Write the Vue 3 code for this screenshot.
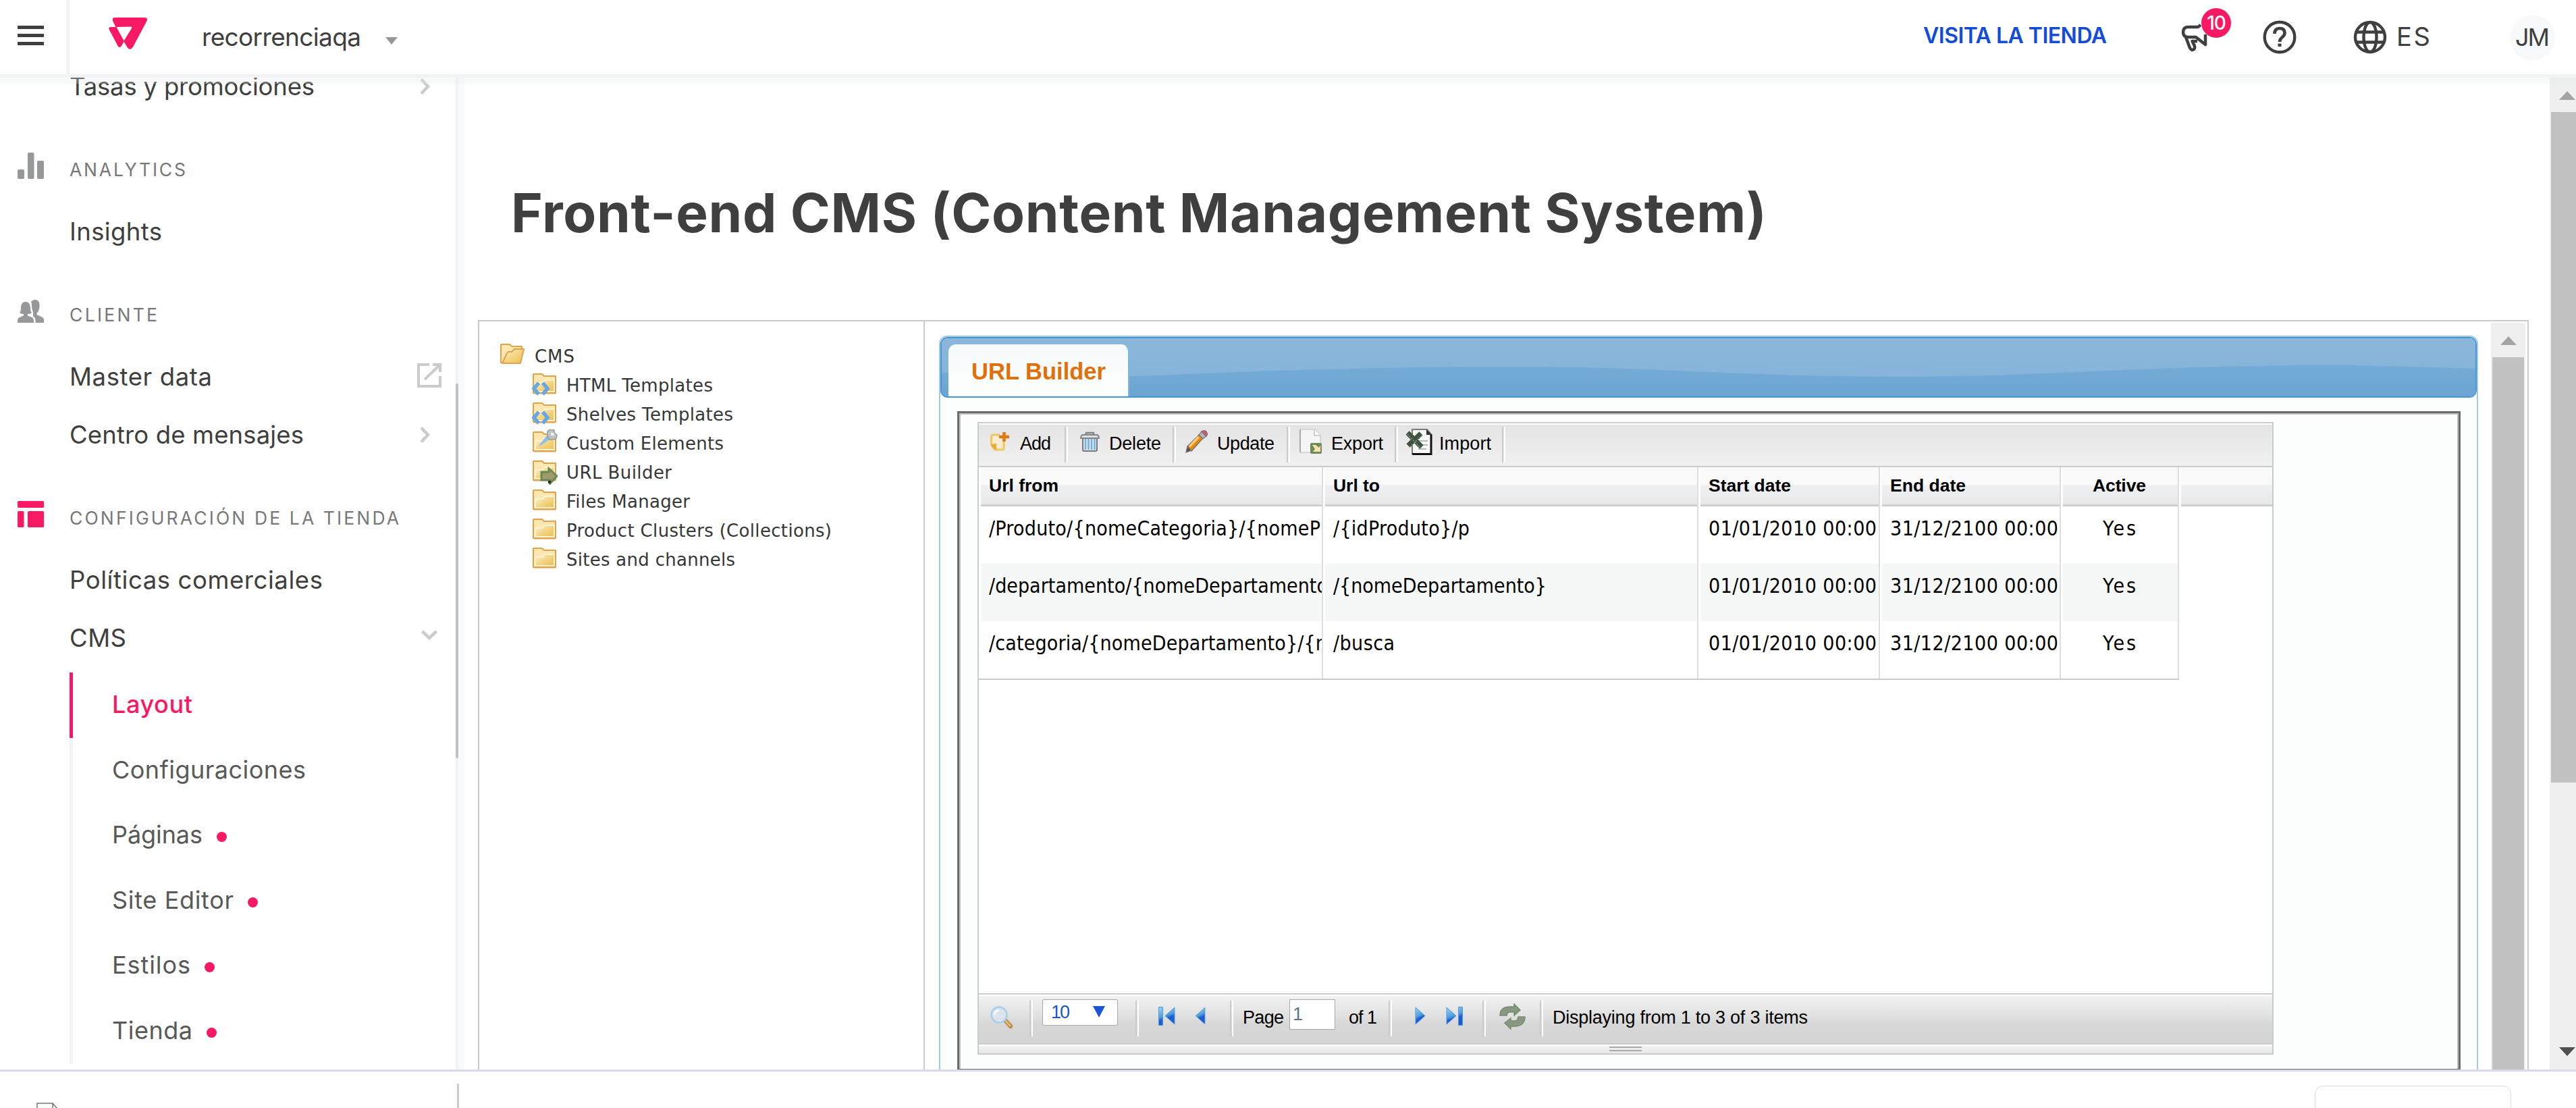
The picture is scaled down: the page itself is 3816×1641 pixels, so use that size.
<script setup>
// Spreads a label over the given width (px) by adjusting its letter spacing.
const applyFit = (el, { value }) => {
  if (!value) return
  el.style.letterSpacing = '0px'
  const natural = el.getBoundingClientRect().width
  const count = el.textContent.length
  const spacing = (value - natural) / Math.max(count - 1, 1)
  el.style.letterSpacing = `${spacing.toFixed(3)}px`
  el.style.marginRight = `${(-spacing).toFixed(3)}px`
}
const vFit = { mounted: applyFit }

const menu = [
  { type: 'item', label: 'Tasas y promociones', width: 363, icon: 'right' },
  { type: 'section', label: 'ANALYTICS', width: 172, icon: 'chart' },
  { type: 'item', label: 'Insights', width: 137 },
  { type: 'section', label: 'CLIENTE', width: 130, icon: 'people' },
  { type: 'item', label: 'Master data', width: 211, icon: 'external' },
  { type: 'item', label: 'Centro de mensajes', width: 347, icon: 'right' },
  { type: 'section', label: 'CONFIGURACIÓN DE LA TIENDA', width: 488, icon: 'layout' },
  { type: 'item', label: 'Políticas comerciales', width: 375 },
  { type: 'item', label: 'CMS', width: 84, icon: 'down' },
]

const submenu = [
  { label: 'Layout', width: 119, active: true },
  { label: 'Configuraciones', width: 287 },
  { label: 'Páginas', width: 134, dot: true },
  { label: 'Site Editor', width: 180, dot: true },
  { label: 'Estilos', width: 116, dot: true },
  { label: 'Tienda', width: 119, dot: true },
]

const tree = [
  { label: 'HTML Templates', width: 217, badge: 'code' },
  { label: 'Shelves Templates', width: 247, badge: 'code' },
  { label: 'Custom Elements', width: 233, badge: 'tool' },
  { label: 'URL Builder', width: 156, badge: 'arrow' },
  { label: 'Files Manager', width: 183 },
  { label: 'Product Clusters (Collections)', width: 393 },
  { label: 'Sites and channels', width: 250 },
]

const tools = [
  { label: 'Add', width: 46, cell: 127 },
  { label: 'Delete', width: 77, cell: 155 },
  { label: 'Update', width: 85, cell: 164 },
  { label: 'Export', width: 77, cell: 155 },
  { label: 'Import', width: 77, cell: 154 },
]

const columns = [
  { label: 'Url from', width: 103 },
  { label: 'Url to', width: 69 },
  { label: 'Start date', width: 122 },
  { label: 'End date', width: 112 },
  { label: 'Active', width: 79 },
]

const start = { text: '01/01/2010 00:00', width: 249 }
const end = { text: '31/12/2100 00:00', width: 249 }
const yes = { text: 'Yes', width: 49 }
const rows = [
  [{ text: '/Produto/{nomeCategoria}/{nomeP', width: 491 }, { text: '/{idProduto}/p', width: 202 }, start, end, yes],
  [{ text: '/departamento/{nomeDepartamento', width: 502 }, { text: '/{nomeDepartamento}', width: 316 }, start, end, yes],
  [{ text: '/categoria/{nomeDepartamento}/{n', width: 501 }, { text: '/busca', width: 91 }, start, end, yes],
]
</script>

<template>
  <div class="app">
    <svg class="defs" width="0" height="0">
      <defs>
        <linearGradient id="blueArrow" x1="0" y1="0" x2="0.3" y2="1">
          <stop offset="0" stop-color="#a5d3ef" />
          <stop offset="0.55" stop-color="#4f9ddc" />
          <stop offset="0.7" stop-color="#1f5fd0" />
          <stop offset="1" stop-color="#1a5bcf" />
        </linearGradient>
        <linearGradient id="folder" x1="0" y1="0" x2="1" y2="1">
          <stop offset="0" stop-color="#fdf3d4" />
          <stop offset="0.5" stop-color="#f4d584" />
          <stop offset="1" stop-color="#e9bf55" />
        </linearGradient>
        <linearGradient id="bandTop" x1="0" y1="0" x2="0" y2="1">
          <stop offset="0" stop-color="#8bb6d9" />
          <stop offset="1" stop-color="#82b2db" />
        </linearGradient>
        <linearGradient id="bandLow" x1="0" y1="0" x2="0" y2="1">
          <stop offset="0" stop-color="#75abd6" />
          <stop offset="1" stop-color="#6ca3d1" />
        </linearGradient>
      </defs>
    </svg>

    <header class="topbar">
      <div class="burger"><i /><i /><i /></div>
      <svg class="logo" width="58" height="49" viewBox="0 0 58 49">
        <path fill="#f71963" fill-rule="evenodd" d="M9 1H53Q58.500 1 56.500 6L36 44.500Q31.500 51 27.500 45L22.500 36.500L19 43Q16.300 47 13.500 43L.8 19Q-1 15 4 15H10.500L6.500 7Q4.500 1 9 1ZM11.500 15L22.500 35.500L34 17Q35 14.500 33 14.500Z" />
      </svg>
      <span v-fit="236" class="store">recorrenciaqa</span>
      <i class="caret" />
      <span class="spacer" />
      <span v-fit="272" class="visit">VISITA LA TIENDA</span>
      <div class="news">
        <svg width="44" height="44" viewBox="0 0 44 44" fill="none" stroke="#3f3f40" stroke-width="4.500" stroke-linejoin="round">
          <path d="M29 3L25 6H11Q3 6 3 13.500Q3 21 11 21H22L36 32V17" />
          <path d="M7 21L13 37Q15.500 41.500 19 39Q21 37 19.500 33L16.500 27H24" />
        </svg>
        <b class="count">10</b>
      </div>
      <svg class="help" width="50" height="50" viewBox="0 0 50 50" fill="none" stroke="#3f3f40">
        <circle cx="25" cy="25" r="22.300" stroke-width="4.400" />
        <path d="M17.500 20Q17.500 12 25 12Q32.500 12 32.500 19Q32.500 22.500 28.500 25.500Q25 28 25 32" stroke-width="4.600" />
        <path d="M25 34.500V39" stroke-width="5" />
      </svg>
      <svg class="globe" width="50" height="50" viewBox="0 0 50 50" fill="none" stroke="#3f3f40" stroke-width="4.400">
        <circle cx="25" cy="25" r="22" />
        <ellipse cx="25" cy="25" rx="9.500" ry="22" />
        <path d="M5 17.500H45M5 32.500H45" />
      </svg>
      <span v-fit="50" class="lang">ES</span>
      <span class="avatar"><span v-fit="51">JM</span></span>
    </header>

    <div class="body">
      <nav class="side">
        <div class="menu">
          <div v-for="entry in menu" :key="entry.label" :class="entry.type">
            <span class="lead">
              <svg v-if="entry.icon === 'chart'" width="39" height="39" viewBox="0 0 39 39" fill="#979899">
                <rect y="25" width="10" height="14" rx="2" /><rect x="15" width="9.500" height="39" rx="2" /><rect x="29" y="12" width="10" height="27" rx="2" />
              </svg>
              <svg v-if="entry.icon === 'people'" width="39" height="34" viewBox="0 0 39 34" fill="#979899">
                <path d="M12 3C6.500 3 5 8 5 12C5 16 4 18 3 19.500Q6 21 9 21V23.500L3 26Q0 27.500 0 30V34H24V30Q24 27.500 21 26L15 23.500V21Q18 21 21 19.500C20 18 19 16 19 12C19 8 17.500 3 12 3Z" />
                <path d="M20 3Q22 0 26 0C31 0 33 4 32.500 10C32.300 15 30 19 28.500 19.500V22L36 25.500Q39 27 39 30V34H26.500V30Q26.500 26 23 24.500V20Q24 19 22.500 17Q21 13 21 8Q21 5 20 3Z" />
              </svg>
              <svg v-if="entry.icon === 'layout'" width="39" height="39" viewBox="0 0 39 39" fill="#f71963">
                <rect width="39" height="10" rx="1.500" /><rect y="15" width="9.500" height="24" rx="1.500" /><rect x="15" y="15" width="24" height="24" rx="1.500" />
              </svg>
            </span>
            <span v-fit="entry.width" class="label">{{ entry.label }}</span>
            <span class="spacer" />
            <svg v-if="entry.icon === 'right'" class="tail right" width="18" height="26" viewBox="0 0 18 26"><path d="M3 2.500L13 13L3 23.500" /></svg>
            <svg v-if="entry.icon === 'down'" class="tail down" width="26" height="18" viewBox="0 0 26 18"><path d="M2.500 3L13 13L23.500 3" /></svg>
            <svg v-if="entry.icon === 'external'" class="tail external" width="38" height="38" viewBox="0 0 38 38"><path d="M19 3H3V35H35V20M24 3H35V14M35 3L12 25" /></svg>
          </div>
          <ul class="submenu">
            <li v-for="s in submenu" :key="s.label" :class="{ active: s.active }">
              <span v-fit="s.width">{{ s.label }}</span><i v-if="s.dot" />
            </li>
          </ul>
        </div>
        <div class="side-track"><i /></div>
      </nav>

      <main class="main">
        <h1><span v-fit="1860">Front-end CMS (Content Management System)</span></h1>
        <div class="frame">
          <div class="tree">
            <div class="node root">
              <svg width="39" height="34" viewBox="0 0 39 34" stroke="#e2a24a" stroke-width="2" stroke-linejoin="round">
                <path d="M2 30V4Q2 3 3 3H15L18 6H33V12L30 30Z" fill="#fbe7b0" />
                <path d="M4 31L11 16Q12 14 14 14H18L22 10H36L31 31Z" fill="url(#folder)" />
              </svg>
              <span v-fit="59">CMS</span>
            </div>
            <div v-for="n in tree" :key="n.label" class="node">
              <svg width="39" height="39" viewBox="0 0 39 39">
                <g stroke="#e2a24a" stroke-width="2" stroke-linejoin="round">
                  <path d="M3 32V5Q3 4 4 4H16L19 7H36V32Z" fill="#fbe7b0" />
                  <path d="M6 30V17H17L20 13H34V30Z" fill="url(#folder)" stroke="#fff3d3" />
                  <path d="M4 32.500H36" />
                </g>
                <g v-if="n.badge === 'code'" fill="none" stroke="#68a8e2" stroke-width="5.500">
                  <path d="M11 17L4 25.500L11 34M17 17L24 25.500L17 34" />
                </g>
                <g v-if="n.badge === 'tool'">
                  <path d="M10 25L24 8L29 13L17 22Z" fill="#8fbfe6" />
                  <path d="M24 11V4Q25 0 30 0L34 1V5L38 8Q38 15 33 15H27Z" fill="#bfc1c2" stroke="#97999a" stroke-width="1.500" />
                  <path d="M29 5H34V9H29Z" fill="#eceeee" />
                </g>
                <g v-if="n.badge === 'arrow'">
                  <path d="M15 20H26V15L38 26L28 37V32H15Z" fill="#a09a6c" stroke="#6b8758" stroke-width="3" />
                  <path d="M25 33H29V37H25Z" fill="#263020" />
                </g>
              </svg>
              <span v-fit="n.width">{{ n.label }}</span>
            </div>
          </div>

          <div class="pane">
            <section class="tabs">
              <div class="band">
                <svg class="wave" width="2272" height="86" viewBox="0 0 2272 86">
                  <rect width="2272" height="86" fill="url(#bandTop)" />
                  <path d="M0 51C100 56 220 60 340 54C520 46 680 42 860 42C1060 42 1200 58 1430 57C1660 56 1780 40 2050 40C2140 40 2200 43 2272 45V86H0Z" fill="url(#bandLow)" />
                </svg>
                <div class="tab"><span v-fit="199">URL Builder</span></div>
              </div>
              <div class="viewport">
                <div class="inner">
                  <div class="grid">
                    <div class="toolbar">
                      <div v-for="t in tools" :key="t.label" class="tool" :style="{ width: t.cell + 5 + 'px' }">
                        <svg width="39" height="39" viewBox="0 0 39 39">
                          <g v-if="t.label === 'Add'">
                            <path d="M19 9H9Q6.500 9 6.500 12V24L12 31H23Q25 31 25 28V17" fill="#fbebd0" stroke="#f0c75f" stroke-width="3" />
                            <path d="M6 23L14 22V31Q8 30 6 23Z" fill="#eda93a" />
                            <path d="M25.500 5V19M18 12H33" stroke="#e07a14" stroke-width="4.500" />
                          </g>
                          <g v-if="t.label === 'Delete'">
                            <path d="M10 14H31V31Q31 33 29 33H12Q10 33 10 31Z" fill="#dfe9f1" stroke="#77787a" stroke-width="2" />
                            <path d="M14 15V31M18.500 15V31M23 15V31M27.500 15V31" stroke="#78aedd" stroke-width="2.500" />
                            <path d="M7 14Q7 9 11 9H30Q34 9 34 14Z" fill="#dadfe1" stroke="#828486" stroke-width="1.800" />
                            <path d="M15 8V6H26V8" fill="none" stroke="#828486" stroke-width="2.500" />
                          </g>
                          <g v-if="t.label === 'Update'" stroke="#77706a" stroke-width="1.200">
                            <path d="M3 35L5 26L11 32Z" fill="#585048" />
                            <path d="M5 26L22 9L28 14L11 33Z" fill="#e8860f" />
                            <path d="M7 25L20 11L23 13L9 28Z" fill="#f6cf79" stroke="none" />
                            <path d="M22 9L26 4L33 11L28 15Z" fill="#b4b4b2" />
                            <path d="M26 4Q30 1 33 4Q36 8 33 11Z" fill="#d9547c" />
                          </g>
                          <g v-if="t.label === 'Export'">
                            <path d="M3 1H25L33 10V35H3Z" fill="#f5f5f5" stroke="#cfcfcf" stroke-width="1.500" />
                            <path d="M3 1V35" stroke="#aaa" stroke-width="2" />
                            <path d="M24 1V10H33" fill="#fff" stroke="#c4c4c4" stroke-width="1.500" />
                            <rect x="18" y="21" width="17" height="16" rx="2" fill="#718a5a" />
                            <path d="M21 24H26L31 28L33 24V34H22L25 30Z" fill="#f7e3ad" />
                          </g>
                          <g v-if="t.label === 'Import'">
                            <path d="M9 1H31L37 8V37H9Z" fill="#f8f8f8" stroke="#757d75" stroke-width="2" />
                            <path d="M37 8V37.500H9" fill="none" stroke="#111" stroke-width="3" />
                            <path d="M30 1V9H38Z" fill="#333" />
                            <path d="M15 18H32M20 24H32M18 30H30" stroke="#b8bcb8" stroke-width="2" />
                            <path d="M2 6L23 27M22 7L3 25" stroke="#3f523f" stroke-width="7.500" />
                            <path d="M2 8L22 29M24 9L6 27" stroke="#8c9f8a" stroke-width="1.500" stroke-dasharray="2 2" />
                          </g>
                        </svg>
                        <span v-fit="t.width">{{ t.label }}</span>
                        <span class="spacer" />
                        <i class="sep" />
                      </div>
                    </div>

                    <div class="row head">
                      <div v-for="c in columns" :key="c.label" class="cell"><span v-fit="c.width">{{ c.label }}</span></div>
                      <div class="cell rest" />
                    </div>
                    <div class="rows">
                      <div v-for="(r, i) in rows" :key="i" class="row data">
                        <div v-for="(c, j) in r" :key="j" class="cell"><span v-fit="c.width">{{ c.text }}</span></div>
                      </div>
                    </div>
                    <div class="blank" />

                    <div class="pager">
                      <svg class="find" width="36" height="36" viewBox="0 0 36 36">
                        <path d="M23 22L31 31" stroke="#b8924f" stroke-width="6.500" stroke-linecap="round" />
                        <path d="M24 23L30 30" stroke="#f0b877" stroke-width="2.500" stroke-linecap="round" />
                        <circle cx="14" cy="14" r="11.500" fill="#dce3ec" stroke="#a5cfec" stroke-width="2.500" />
                        <path d="M7 14Q8 8 14 7" fill="none" stroke="#fff" stroke-width="2.500" />
                      </svg>
                      <i class="sep" />
                      <div class="select"><span v-fit="28">10</span><i /></div>
                      <i class="sep" />
                      <svg class="nav first" width="26" height="30" viewBox="0 0 26 30" fill="url(#blueArrow)" stroke="#4d9add"><path d="M1.500 1.500H7.500V28.500H1.500Z M25 2V27L11 14.500Z" /></svg>
                      <svg class="nav prev" width="16" height="30" viewBox="0 0 16 30" fill="url(#blueArrow)" stroke="#6fa8d6"><path d="M15 2V27L1 14.500Z" /></svg>
                      <i class="sep" />
                      <span v-fit="61" class="txt page">Page</span>
                      <div class="input">1</div>
                      <span v-fit="42" class="txt">of 1</span>
                      <i class="sep after-total" />
                      <svg class="nav next" width="16" height="30" viewBox="0 0 16 30" fill="url(#blueArrow)" stroke="#4d9add"><path d="M1 2V27L15 14.500Z" /></svg>
                      <svg class="nav last" width="26" height="30" viewBox="0 0 26 30" fill="url(#blueArrow)" stroke="#4d9add"><path d="M18.500 1.500H24.500V28.500H18.500Z M1 2V27L15 14.500Z" /></svg>
                      <i class="sep" />
                      <svg class="reload" width="39" height="39" viewBox="0 0 39 39" stroke="#76906a" stroke-width="1.500" fill="#8b9584">
                        <path d="M1 18Q1 6 14 5H22V1L31 10L22 18V13H16Q12 13 11 18Z" />
                        <path d="M38 20Q38 32 25 34H17V38L8 29L17 22V26H23Q27 26 28 20Z" />
                      </svg>
                      <i class="sep" />
                      <span v-fit="378" class="txt info">Displaying from 1 to 3 of 3 items</span>
                    </div>
                    <div class="resizer"><i /></div>
                  </div>
                </div>
              </div>
            </section>
            <div class="scroll inner-scroll"><i class="up" /><i class="thumb" /></div>
          </div>
        </div>
      </main>

      <div class="scroll page-scroll"><i class="up" /><i class="thumb" /><span class="spacer" /><i class="dn" /></div>
      <div class="shade" />
    </div>

    <footer class="foot">
      <svg class="file" width="32" height="40" viewBox="0 0 32 40" fill="#fafbfb" stroke="#76777a" stroke-width="1.500"><path d="M1 40V1H24L31 9V40M24 1V9H31" /></svg>
      <i class="split" />
      <div class="button" />
    </footer>
  </div>
</template>

<style>
body { margin: 0; background: #fefefe; overflow: hidden; }
</style>

<style scoped>
* { box-sizing: border-box; }
.app { width: 3816px; height: 1641px; overflow: hidden; display: flex; flex-direction: column; background: #fefefe; font-family: Inter, sans-serif; color: #3f3f40; white-space: nowrap; }
.defs { position: absolute; }
svg { display: block; flex: none; }
.spacer { flex: 1; }

.topbar { height: 115px; flex: none; border-bottom: 5px solid #f2f3f7; display: flex; align-items: flex-start; }
.burger { width: 103px; height: 110px; border-right: 5px solid #f3f3f4; padding: 38px 0 0 26px; display: flex; flex-direction: column; gap: 7px; }
.burger i { width: 39px; height: 5px; background: #3f3f40; }
.logo { margin: 25px 0 0 58px; }
.store { margin: 24px 0 0 80px; font-size: 37px; line-height: 61px; }
.caret { margin: 55px 0 0 36px; border: 9px solid transparent; border-top: 11px solid #979899; border-bottom: 0; }
.visit { font-size: 32px; line-height: 60px; font-weight: 600; color: #134cd8; margin-top: 23px; }
.news { position: relative; margin: 34px 0 0 110px; width: 44px; height: 44px; }
.count { position: absolute; left: 30px; top: -22px; width: 44px; height: 44px; border-radius: 22px; background: #f71963; color: #fff; font: 500 28px/44px Inter, sans-serif; letter-spacing: -1px; text-align: center; }
.help { margin: 30px 0 0 77px; }
.globe { margin: 30px 0 0 84px; }
.lang { margin: 23px 0 0 14px; font-size: 38px; line-height: 62px; }
.avatar { margin: 22px 31px 0 118px; width: 67px; height: 67px; border-radius: 50%; background: #f7f9fa; font-size: 36px; line-height: 66px; display: flex; justify-content: center; }

.body { position: relative; height: 1469px; flex: none; display: flex; overflow: hidden; }
.shade { position: absolute; left: 0; top: 0; right: 0; height: 9px; background: rgba(230, 235, 235, .28); }
.side { width: 688px; flex: none; display: flex; overflow: hidden; }
.menu { width: 675px; margin-top: -30px; }
.item { height: 86px; line-height: 87px; display: flex; font-size: 36.500px; }
.section { margin-top: 30px; height: 99px; line-height: 100px; display: flex; font-size: 26.500px; color: #777879; }
.lead { width: 103px; flex: none; padding-left: 26px; display: flex; align-items: center; padding-bottom: 10px; }
.label { flex: none; }
.tail { fill: none; stroke: #cbcbcb; stroke-width: 4.500px; align-self: center; }
.tail.right { margin-right: 36px; }
.tail.down { margin-right: 26px; margin-bottom: 9px; }
.tail.external { margin-right: 20px; stroke-width: 4px; margin-bottom: 4px; }
.submenu { list-style: none; margin: 8px 0 0 103px; padding: 0; }
.submenu li { height: 96.600px; border-left: 5px solid #f3f3f4; padding-left: 58px; font-size: 36px; line-height: 94px; color: #585959; display: flex; align-items: flex-start; }
.submenu li.active { color: #f71963; border-color: #f71963; font-weight: 500; }
.submenu i { width: 15px; height: 15px; border-radius: 50%; background: #f71963; margin: 43px 0 0 21px; }
.side-track { width: 13px; background: #f9fafb; border-left: 4px solid #f2f2f3; padding-top: 453px; }
.side-track i { display: block; width: 4px; height: 555px; margin-left: -4px; background: #c1c1c1; border-radius: 2px; }

.main { width: 3089px; flex: none; padding-left: 20px; }
h1 { margin: 150px 0 109px 49px; font-size: 80px; line-height: 100px; font-weight: 700; color: #3f3f40; }
.frame { width: 3038px; height: 1110px; border: 2px solid #cbcbcb; border-bottom: 0; display: flex; }
.tree { width: 660px; flex: none; border-right: 2px solid #cbcbcb; padding: 31px 0 0 77px; font-family: "DejaVu Sans", Verdana, sans-serif; font-size: 26px; color: #363738; }
.node { height: 43px; display: flex; line-height: 42px; gap: 13px; }
.root { margin-left: -47px; line-height: 42px; }

.pane { flex: 1; display: flex; }
.tabs { width: 2280px; height: 1087px; margin: 21px 0 0 21px; border: 2px solid #a6c9e2; border-bottom: 0; border-radius: 12px 12px 0 0; background: #fcfdfd; flex: none; }
.band { position: relative; height: 90px; border: 2px solid #4297d7; border-radius: 11px; overflow: hidden; }
.tab { position: absolute; left: 10px; top: 9px; width: 268px; height: 79px; background: linear-gradient(#f5f9fb, #fcfdfd 60%); border-right: 2px solid #79b7e7; border-radius: 11px 11px 0 0; padding-left: 34px; font: 700 34.500px/80px "Liberation Sans", Arial, sans-serif; color: #e17009; box-shadow: 0 3px 0 #fcfdfd; }
.viewport { margin: 20px 0 0 25px; width: 2227px; height: 975px; border: 3px solid #6c6c6c; border-bottom-width: 1px; }
.inner { height: 971px; border: 2px solid #c0c0c0; border-bottom: 0; padding: 11px 0 0 25px; }
.grid { width: 1920px; height: 937px; border: 2px solid #cbcbcb; background: #fff; display: flex; flex-direction: column; font-family: "Liberation Sans", Arial, sans-serif; font-size: 27px; color: #000; overflow: hidden; }
.toolbar { height: 65px; flex: none; border-top: 2px solid #fff; border-bottom: 2px solid #cbcbcb; background: linear-gradient(#e4e4e4, #f0f0f0); display: flex; padding-top: 3px; }
.tool { display: flex; padding-left: 12px; line-height: 50px; flex: none; }
.tool svg { margin: 3px 10px 0 0; }
.sep { display: block; width: 5px; height: 53px; border-left: 2px solid #cbcbcb; border-right: 2px solid #fff; flex: none; }

.row { display: grid; grid-template-columns: 510px 556px 269px 268px 175px 138px; flex: none; }
.cell { border-right: 2px solid #dedede; padding-left: 15px; overflow: hidden; position: relative; }
.cell:nth-child(5) { text-align: center; padding-left: 0; }
.head { height: 58px; font-weight: 700; font-size: 26.500px; line-height: 54px; background: linear-gradient(#fafafa, #f9f9fa 44%, #eff0f2 46%, #e8e8ea 95%, #cbcbcb 96%); }
.head .cell { box-shadow: inset 3px 0 0 #fff; }
.head .rest { border: 0; }
.rows { width: 1778px; border-bottom: 2px solid #cbcbcb; font-family: "DejaVu Sans Condensed", "DejaVu Sans", Tahoma, sans-serif; font-stretch: condensed; font-size: 30px; }
.data { grid-template-columns: 510px 556px 269px 268px 175px; height: 85px; line-height: 65px; }
.data .cell { box-shadow: inset 3px 0 0 #fff; }
.data:nth-child(2) .cell { background: #f6f8f8; }
.blank { flex: 1; }

.pager { height: 76px; flex: none; border-top: 2px solid #cbcbcb; border-bottom: 2px solid #cbcbcb; box-shadow: inset 0 2px 0 #fff; background: linear-gradient(#f1f1f2 4%, #e2e2e2 40%, #d7d7d7 62%, #d5d5d5); display: flex; align-items: flex-start; line-height: 68px; }
.pager .sep { margin-top: 9px; }
.find { margin: 16px 23px 0 16px; }
.select { margin: 7px 26px 0 14px; width: 112px; height: 39px; border: 1px solid #a9a9a9; border-radius: 2px; background: #fff; display: flex; line-height: 37px; padding-left: 12px; color: #1a56c8; }
.select i { margin: 9px 0 0 34px; border: 9px solid transparent; border-top: 17px solid #1a55d8; border-bottom: 0; height: 0; }
.nav { margin-top: 17px; }
.first { margin-left: 28px; }
.prev { margin-left: 29px; margin-right: 36px; }
.page { margin-left: 14px; }
.input { margin: 7px 20px 0 8px; width: 68px; height: 45px; border: 1px solid #a9a9a9; background: #fff; padding-left: 4px; font-size: 27px; line-height: 43px; color: #5b7290; }
.after-total { margin-left: 17px; }
.next { margin-left: 34px; }
.last { margin-left: 30px; margin-right: 28px; }
.reload { margin: 13px 21px 0 20px; }
.info { margin-left: 14px; }
.resizer { height: 13px; flex: none; border-top: 2px solid #fff; background: linear-gradient(#f1f1f1, #e8e8e9); display: flex; justify-content: center; }
.resizer i { width: 48px; height: 7px; margin-top: 1px; border-top: 2px solid #a9a9a9; border-bottom: 2px solid #a9a9a9; }

.scroll { background: #efefef; display: flex; flex-direction: column; align-items: center; flex: none; }
.scroll .up { border: 12.500px solid transparent; border-bottom: 13px solid #a3a3a3; border-top: 0; height: 0; }
.scroll .dn { border: 12.500px solid transparent; border-top: 13px solid #505050; border-bottom: 0; height: 0; margin-bottom: 20px; }
.thumb { background: #c1c1c1; }
.inner-scroll { margin: 2px 0 0 19px; width: 51px; padding-top: 20px; }
.inner-scroll .thumb { width: 47px; height: 1060px; margin-top: 18px; }
.page-scroll { width: 51px; padding-top: 20px; }
.page-scroll .thumb { width: 47px; height: 993px; margin-top: 18px; }

.foot { flex: 1; border-top: 3px solid #dadce4; display: flex; align-items: flex-start; overflow: hidden; }
.file { margin: 46px 0 0 54px; }
.split { width: 3px; height: 60px; margin: 18px 0 0 591px; background: #cbcbcb; }
.button { width: 291px; height: 80px; margin: 21px 0 0 2749px; border: 1px solid #dadbe0; border-radius: 12px; flex: none; }
</style>
